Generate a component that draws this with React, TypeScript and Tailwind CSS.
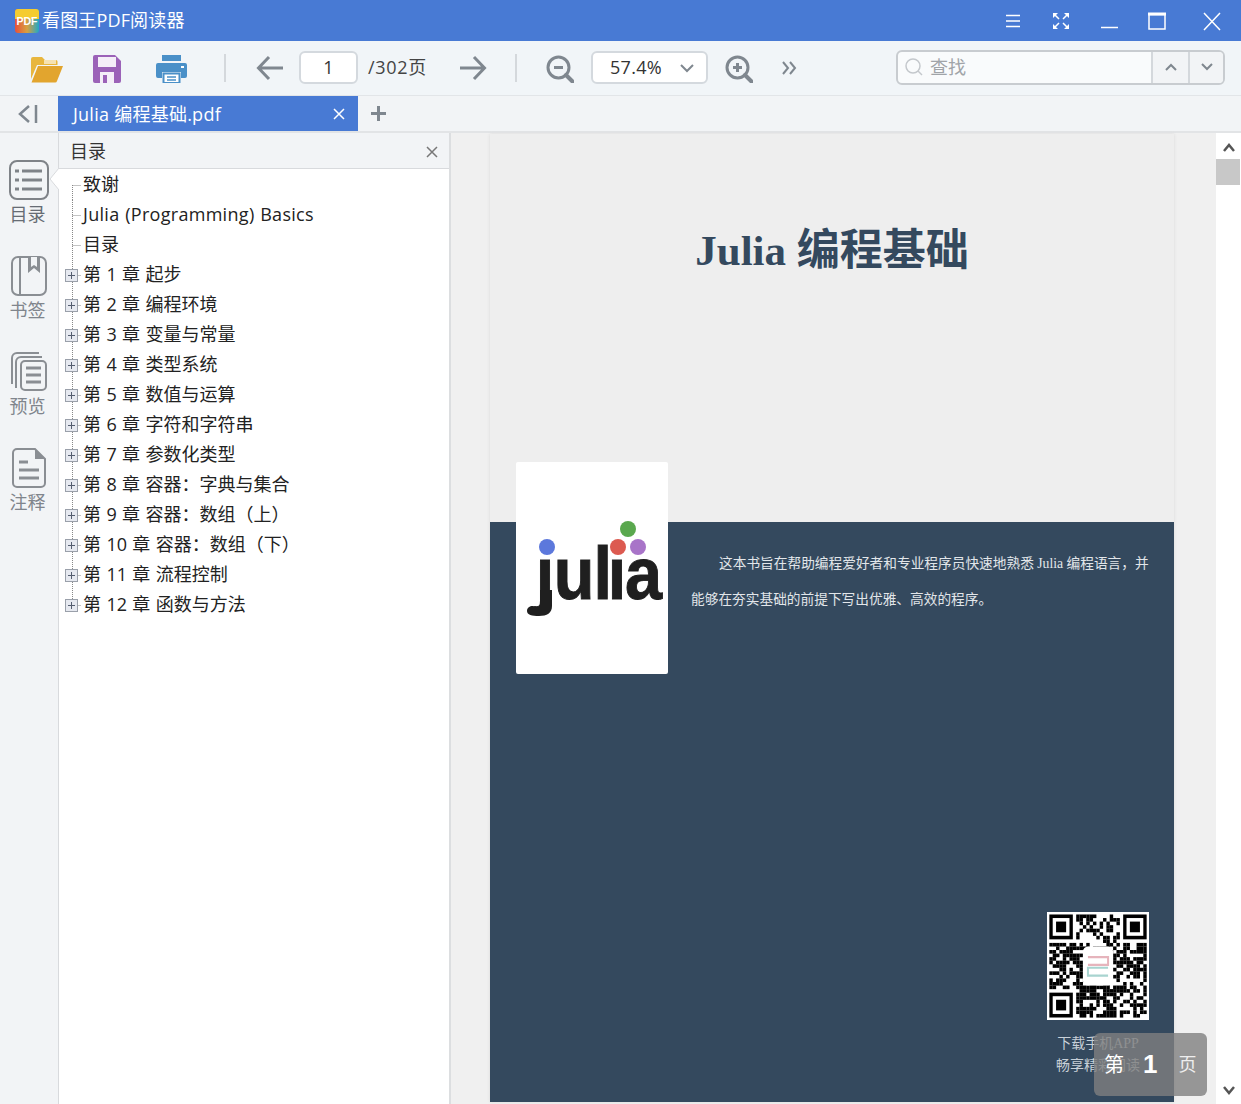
import React from 'react';

const tocTop = ['致谢', 'Julia (Programming) Basics', '目录'];
const chapters = [
  '第 1 章 起步',
  '第 2 章 编程环境',
  '第 3 章 变量与常量',
  '第 4 章 类型系统',
  '第 5 章 数值与运算',
  '第 6 章 字符和字符串',
  '第 7 章 参数化类型',
  '第 8 章 容器：字典与集合',
  '第 9 章 容器：数组（上）',
  '第 10 章 容器：数组（下）',
  '第 11 章 流程控制',
  '第 12 章 函数与方法',
];

const uiFont = "font-['Open_Sans','Noto_Sans_CJK_SC',sans-serif]";

const TreeGutter: React.FC<{ expandable?: boolean; last?: boolean; first?: boolean }> = ({ expandable, last, first }) => (
  <svg width="24" height="30" className="shrink-0">
    <line x1="13.5" y1={first ? 15 : 0} x2="13.5" y2={last ? 15 : 30} stroke="#888" strokeDasharray="1 1" />
    <line x1="13.5" y1="15.5" x2="22" y2="15.5" stroke="#888" strokeDasharray="1 1" />
    {expandable && (
      <>
        <rect x="6.5" y="9.5" width="12" height="12" fill="#e6e9f0" stroke="#9aa0aa" />
        <path d="M9 15.5h7M12.5 12v7" stroke="#555e70" />
      </>
    )}
  </svg>
);

const QrCode: React.FC = () => {
  const n = 29;
  const cells: React.ReactNode[] = [];
  let seed = 23;
  const inFinder = (x: number, y: number) => (x < 8 && y < 8) || (x > n - 9 && y < 8) || (x < 8 && y > n - 9);
  for (let y = 0; y < n; y++) {
    for (let x = 0; x < n; x++) {
      seed = (seed * 1103515245 + 12345) & 0x7fffffff;
      if (inFinder(x, y)) continue;
      if ((seed >> 16) % 100 < 60) cells.push(<rect key={`${x}-${y}`} x={x} y={y} width="1.02" height="1.02" fill="#000" />);
    }
  }
  const finder = (x: number, y: number) => (
    <g key={`${x}${y}`}>
      <rect x={x} y={y} width="7" height="7" fill="#000" />
      <rect x={x + 1} y={y + 1} width="5" height="5" fill="#fff" />
      <rect x={x + 2} y={y + 2} width="3" height="3" fill="#000" />
    </g>
  );
  return (
    <svg width="102" height="108" viewBox="-0.7 -0.7 30.4 30.4" preserveAspectRatio="none" className="bg-white">
      {cells}
      {finder(0, 0)}
      {finder(22, 0)}
      {finder(0, 22)}
      <rect x="10" y="9" width="9" height="11" rx="1.5" fill="#fff" />
      <path d="M11.500 12h6v2.200h-6" fill="none" stroke="#e6b4bc" strokeWidth=".6" />
      <path d="M17.500 15h-6v2.200h6" fill="none" stroke="#a8d4d0" strokeWidth=".6" />
    </svg>
  );
};

const JuliaLogo: React.FC = () => (
  <svg width="152" height="212" viewBox="0 0 152 212">
    <g transform="scale(0.9 1)">
      <text
        x="22 42 86 102 121"
        y="137"
        fontFamily="'Liberation Sans', sans-serif"
        fontWeight="700"
        fontSize="74"
        fill="#1f1f1f"
        stroke="#1f1f1f"
        strokeWidth="1"
      >
        julia
      </text>
    </g>
    <path d="M24 128h12v16c0 7-5 10-13 10-7 0-12-1-12-5 0-5 6-6 9-4 3 1 4 0 4-3z" fill="#1f1f1f" />
    <rect x="19" y="76" width="22" height="20" fill="#fff" />
    <rect x="93" y="76" width="17" height="20" fill="#fff" />
    <circle cx="31" cy="85" r="8" fill="#5c78dc" />
    <circle cx="112" cy="67" r="8" fill="#5aa84e" />
    <circle cx="102" cy="85" r="8" fill="#dc5a50" />
    <circle cx="122" cy="85" r="8" fill="#a874c8" />
  </svg>
);

const SideItem: React.FC<{ label: string; active?: boolean; icon: React.ReactNode }> = ({ label, active, icon }) => (
  <div className="relative flex h-[96px] flex-col items-center">
    <div className="flex h-[40px] w-[40px] items-center justify-center">{icon}</div>
    <span className={`mt-[2px] pr-[3px] text-[18px] leading-[24px] ${active ? 'text-[#666c74]' : 'text-[#80858c]'}`}>{label}</span>
    {active && (
      <svg width="10" height="22" className="absolute right-[-1px] top-[8px]">
        <path d="M10 0 L1 11 L10 22 Z" fill="#fff" />
        <path d="M10 0 L1 11 L10 22" fill="none" stroke="#d8dadd" />
      </svg>
    )}
  </div>
);

const App: React.FC = () => {
  return (
    <div className={`flex h-[1104px] w-[1241px] flex-col overflow-hidden bg-white ${uiFont}`}>
      {/* title bar */}
      <div className="flex h-[41px] shrink-0 items-center bg-[#487ad4] pl-[15px] text-white">
        <svg width="24" height="24" viewBox="0 0 24 24" className="shrink-0">
          <defs>
            <linearGradient id="pdfLogo" x1="0" y1="0" x2="1" y2="0">
              <stop offset="0" stopColor="#e8503a" />
              <stop offset=".5" stopColor="#d8a040" />
              <stop offset="1" stopColor="#1ea8c8" />
            </linearGradient>
          </defs>
          <rect width="24" height="24" rx="3" fill="url(#pdfLogo)" />
          <path d="M3 0h18a3 3 0 013 3v7H0V3a3 3 0 013-3z" fill="#f5cc30" />
          <text x="12" y="16" textAnchor="middle" fontSize="11" fontWeight="700" textLength="21" lengthAdjust="spacingAndGlyphs" fill="#fff" fontFamily="'Liberation Sans', sans-serif">PDF</text>
        </svg>
        <span className="ml-[3px] text-[18px] tracking-[0.15px]">看图王PDF阅读器</span>
        <div className="flex-1" />
        <svg width="16" height="16" className="mr-[31px]" stroke="#fff" strokeWidth="1.5">
          <path d="M1 2.500h14M1 8h14M1 13.500h14" />
        </svg>
        <svg width="18" height="18" className="mr-[31px]" stroke="#fff" strokeWidth="1.5" fill="none">
          <path d="M2 2l5 5M16 2l-5 5M2 16l5-5M16 16l-5-5" />
          <path d="M1 1h5L1 6zM17 1h-5l5 5zM1 17h5l-5-5zM17 17h-5l5-5z" fill="#fff" stroke="none" />
        </svg>
        <svg width="17" height="17" className="mr-[30px]" stroke="#fff" strokeWidth="1.5">
          <path d="M0 15.500h17" />
        </svg>
        <svg width="18" height="18" className="mr-[37px]" stroke="#fff" fill="none">
          <rect x="1" y="2.500" width="16" height="14.500" strokeWidth="1.500" />
          <path d="M0 2h18" strokeWidth="3" />
        </svg>
        <svg width="18" height="20" className="mr-[20px]" stroke="#fff" strokeWidth="1.500">
          <path d="M1 2l16 17M17 2L1 19" />
        </svg>
      </div>

      {/* toolbar */}
      <div className="flex h-[55px] shrink-0 items-center border-b border-[#e2e5e8] bg-[#f1f5f8] pb-[2px] pl-[30px]">
        <svg width="34" height="28" viewBox="0 0 34 28" className="mt-[3px]">
          <path d="M1 4a2 2 0 012-2h9l3 3h11a1.500 1.500 0 011.500 1.500V10H7L1 24z" fill="#e8b63e" />
          <path d="M8 11h25l-6 15a2 2 0 01-2 1.500H1.500z" fill="#e2a52e" />
          <path d="M14 5h12v4H14z" fill="#fff" opacity=".6" />
        </svg>
        <svg width="28" height="28" viewBox="0 0 28 28" className="ml-[29px] mt-[3px]">
          <path d="M2 0h20l6 6v20a2 2 0 01-2 2H2a2 2 0 01-2-2V2a2 2 0 012-2z" fill="#9b62b8" />
          <rect x="5" y="2" width="18" height="10" fill="#f4eef8" />
          <rect x="7" y="17" width="14" height="11" fill="#f4eef8" />
          <rect x="10" y="20" width="4" height="8" fill="#9b62b8" />
        </svg>
        <svg width="31" height="28" viewBox="0 0 31 28" className="ml-[35px] mt-[3px]">
          <path d="M6 0h19v6H6z" fill="#4a90c8" />
          <path d="M2 8h27a2 2 0 012 2v11a2 2 0 01-2 2h-4v-6H6v6H2a2 2 0 01-2-2V10a2 2 0 012-2z" fill="#4a90c8" />
          <rect x="25" y="11" width="3" height="2" fill="#fff" />
          <path d="M7.500 18.500h16v9.500h-16z" fill="#fff" stroke="#4a90c8" strokeWidth="2" />
          <path d="M11 22h9M11 25h9" stroke="#4a90c8" strokeWidth="1.500" />
        </svg>
        <div className="ml-[37px] mt-[1px] h-[28px] w-[2px] bg-[#d4d8dc]" />
        <svg width="28" height="26" viewBox="0 0 28 26" fill="none" stroke="#7f878f" strokeWidth="3" className="ml-[30px] mt-[2px]">
          <path d="M27 13H3M13 2L2.500 13 13 24" />
        </svg>
        <div className="ml-[15px] flex h-[33px] w-[59px] items-center justify-center rounded-[6px] border-2 border-[#d4d9de] bg-white text-[18px] text-[#333]">1</div>
        <span className="ml-[10px] w-[60px] text-[18px] tracking-[0.7px] text-[#444]">/302页</span>
        <svg width="28" height="26" viewBox="0 0 28 26" fill="none" stroke="#7f878f" strokeWidth="3" className="ml-[31px] mt-[2px]">
          <path d="M1 13h24M15 2l10.500 11L15 24" />
        </svg>
        <div className="ml-[28px] mt-[1px] h-[28px] w-[2px] bg-[#d4d8dc]" />
        <svg width="28" height="28" viewBox="0 0 28 28" fill="none" stroke="#7f878f" className="ml-[29px] mt-[3px]">
          <circle cx="12.500" cy="12.500" r="10.500" strokeWidth="3" />
          <path d="M20 20l6.500 6.500" strokeWidth="4" strokeLinecap="round" />
          <path d="M8 12.500h9" strokeWidth="3" />
        </svg>
        <div className="ml-[17px] flex h-[33px] w-[117px] items-center rounded-[6px] border-2 border-[#d4d9de] bg-white pl-[17px] text-[18px] text-[#333]">
          <span className="w-[70px] tracking-[0.3px]">57.4%</span>
          <svg width="14" height="10" fill="none" stroke="#7f878f" strokeWidth="2" className="mt-[2px]">
            <path d="M1 2l6 6 6-6" />
          </svg>
        </div>
        <svg width="28" height="28" viewBox="0 0 28 28" fill="none" stroke="#7f878f" className="ml-[17px] mt-[3px]">
          <circle cx="12.500" cy="12.500" r="10.500" strokeWidth="3" />
          <path d="M20 20l6.500 6.500" strokeWidth="4" strokeLinecap="round" />
          <path d="M8 12.500h9M12.500 8v9" strokeWidth="3" />
        </svg>
        <svg width="15" height="14" fill="none" stroke="#7f878f" strokeWidth="2" className="ml-[29px] mt-[2px]">
          <path d="M1 1l5 6-5 6M8 1l5 6-5 6" />
        </svg>
        <div className="ml-[99px] flex h-[35px] w-[329px] overflow-hidden rounded-[6px] border-2 border-[#c8ccd0] bg-[#f9fbfc]">
          <div className="flex w-[253px] items-center pl-[6px]">
            <svg width="20" height="20" fill="none" stroke="#c4c8cc" strokeWidth="1.500">
              <circle cx="9" cy="9" r="7" />
              <path d="M14 14l4 4" />
            </svg>
            <span className="ml-[6px] text-[18px] text-[#a0a4a8]">查找</span>
          </div>
          <div className="flex w-[37px] items-center justify-center border-l-2 border-[#d4d8dc] bg-[#f2f4f6]">
            <svg width="12" height="8" fill="none" stroke="#7f878f" strokeWidth="2">
              <path d="M1 7l5-5 5 5" />
            </svg>
          </div>
          <div className="flex flex-1 items-center justify-center border-l-2 border-[#d4d8dc] bg-[#f2f4f6]">
            <svg width="12" height="8" fill="none" stroke="#7f878f" strokeWidth="2">
              <path d="M1 1l5 5 5-5" />
            </svg>
          </div>
        </div>
      </div>

      {/* tab row */}
      <div className="flex h-[37px] shrink-0 border-b-2 border-[#e2e4e6] bg-[#f2f4f6]">
        <div className="flex w-[58px] items-center justify-center">
          <svg width="20" height="20" fill="none" stroke="#7f878f" strokeWidth="2.500" className="mr-[2px]">
            <path d="M11 2L2 10l9 8M18 1v18" />
          </svg>
        </div>
        <div className="flex w-[300px] items-center bg-[#487ad4] pl-[15px] pr-[13px] pt-px text-[18px] tracking-[0.25px] text-white">
          <span className="flex-1">Julia 编程基础.pdf</span>
          <svg width="12" height="12" stroke="#fff" strokeWidth="1.500">
            <path d="M1 1l10 10M11 1L1 11" />
          </svg>
        </div>
        <div className="ml-[13px] flex items-center">
          <svg width="15" height="15" stroke="#7f878f" strokeWidth="3">
            <path d="M0 7.500h15M7.500 0v15" />
          </svg>
        </div>
      </div>

      {/* main */}
      <div className="flex min-h-0 flex-1">
        {/* left icon rail */}
        <div className="w-[59px] shrink-0 border-r border-[#d8dadd] bg-[#f2f4f6] pt-[27px]">
          <SideItem
            label="目录"
            active
            icon={
              <svg width="40" height="40" viewBox="0 0 40 40" fill="none" stroke="#7f8388">
                <rect x="1" y="1" width="38" height="38" rx="7" strokeWidth="2" />
                <path d="M6 11h4M13 11h20M6 20h4M13 20h20M6 29h4M13 29h20" strokeWidth="3" />
              </svg>
            }
          />
          <SideItem
            label="书签"
            icon={
              <svg width="36" height="40" viewBox="0 0 36 40" fill="none" stroke="#8a8e93" strokeWidth="2">
                <rect x="1" y="1" width="34" height="38" rx="6" />
                <path d="M9 1v38" />
                <path d="M17 1h12v16l-6-5-6 5z" fill="#8a8e93" stroke="none" />
                <path d="M20 1h6v10l-3-2-3 2z" fill="#f2f4f6" stroke="none" />
              </svg>
            }
          />
          <SideItem
            label="预览"
            icon={
              <svg width="38" height="40" viewBox="0 0 38 40" fill="none" stroke="#8a8e93">
                <path d="M29 1H7a5 5 0 00-5 5v26" strokeWidth="2" />
                <path d="M32 5H11a5 5 0 00-5 5v26" strokeWidth="2" />
                <rect x="11" y="9" width="25" height="29" rx="4" fill="#f2f4f6" strokeWidth="2" />
                <path d="M16 16h15M16 23h15M16 30h15" strokeWidth="3" />
              </svg>
            }
          />
          <SideItem
            label="注释"
            icon={
              <svg width="34" height="40" viewBox="0 0 34 40" fill="none" stroke="#8a8e93" strokeWidth="2">
                <path d="M5 1h18l10 10v24a4 4 0 01-4 4H5a4 4 0 01-4-4V5a4 4 0 014-4z" />
                <path d="M23 1v10h10" fill="#8a8e93" stroke="none" />
                <path d="M7 14h9M7 22h20M7 30h20" strokeWidth="3" />
              </svg>
            }
          />
        </div>

        {/* toc panel */}
        <div className="w-[392px] shrink-0 border-r-2 border-[#dcdee0] bg-white">
          <div className="flex h-[36px] items-center border-b border-[#d8dadd] bg-[#f2f4f6] pl-[11px] pr-[11px] pt-[2px] text-[18px] text-[#333]">
            <span className="flex-1">目录</span>
            <svg width="12" height="12" stroke="#777" strokeWidth="1.500">
              <path d="M1 1l10 10M11 1L1 11" />
            </svg>
          </div>
          <div className="pt-px text-[18px] text-[#222] [word-spacing:0.7px]">
            {tocTop.map((t, i) => (
              <div key={t} className="flex h-[30px]">
                <TreeGutter first={i === 0} />
                <span className={`leading-[28px] ${i === 1 ? 'tracking-[0.3px]' : ''}`}>{t}</span>
              </div>
            ))}
            {chapters.map((t, i) => (
              <div key={t} className="flex h-[30px]">
                <TreeGutter expandable last={i === chapters.length - 1} />
                <span className="leading-[28px]">{t}</span>
              </div>
            ))}
          </div>
        </div>

        {/* document view */}
        <div className="relative flex min-w-0 flex-1 bg-[#f0f0f0]">
          <div className="flex-1 pl-[39px] pt-px">
            <div className="relative flex h-[968px] w-[684px] flex-col shadow-[0_0_3px_#d8d8d8]">
              <div className="flex h-[388px] shrink-0 justify-center bg-[#eeeeee] pt-[87px]">
                <h1 className="text-[43px] font-bold leading-[60px] text-[#34495e] font-['Liberation_Serif','Noto_Sans_CJK_SC',serif]">
                  Julia 编程基础
                </h1>
              </div>
              <div className="flex flex-1 flex-col bg-[#34495e] font-['Liberation_Serif','Noto_Sans_CJK_SC',serif]">
                <p className="pl-[201px] pr-[20px] pt-[24px] text-[13.7px] leading-[36px] text-[#e2e6ea] indent-[28px]">
                  这本书旨在帮助编程爱好者和专业程序员快速地熟悉 Julia 编程语言，并能够在夯实基础的前提下写出优雅、高效的程序。
                </p>
                <div className="mt-auto flex flex-col items-center self-end pb-[25px] pr-[25px]">
                  <QrCode />
                  <div className="mt-[13px] text-center text-[14px] leading-[22px] text-[#c8d0d8]">
                    下载手机APP
                    <br />
                    畅享精彩阅读
                  </div>
                </div>
              </div>
              {/* logo card sits over both halves of the cover */}
              <div className="absolute left-[26px] top-[328px] rounded-[2px] bg-white">
                <JuliaLogo />
              </div>
            </div>
          </div>

          {/* scrollbar */}
          <div className="flex w-[25px] shrink-0 flex-col bg-white">
            <div className="flex h-[26px] items-center justify-center pt-[2px]">
              <svg width="12" height="9" fill="none" stroke="#555" strokeWidth="2.500">
                <path d="M1 8l5-6 5 6" />
              </svg>
            </div>
            <div className="h-[26px] w-[24px] bg-[#c8c8c8]" />
            <div className="mt-auto flex h-[26px] items-center justify-center pb-[2px]">
              <svg width="12" height="9" fill="none" stroke="#555" strokeWidth="2.500">
                <path d="M1 1l5 6 5-6" />
              </svg>
            </div>
          </div>

          {/* page badge */}
          <div className="absolute left-[643px] top-[900px] flex h-[63px] w-[113px] items-center rounded-[6px] bg-[#808080]/80 pl-[10px] text-white">
            <span className="text-[20px]">第</span>
            <span className="ml-[19px] font-['Liberation_Sans',sans-serif] text-[26px] font-bold">1</span>
            <span className="ml-[21px] text-[18px] text-[#eeeeee]">页</span>
          </div>
        </div>
      </div>
    </div>
  );
};

export default App;
